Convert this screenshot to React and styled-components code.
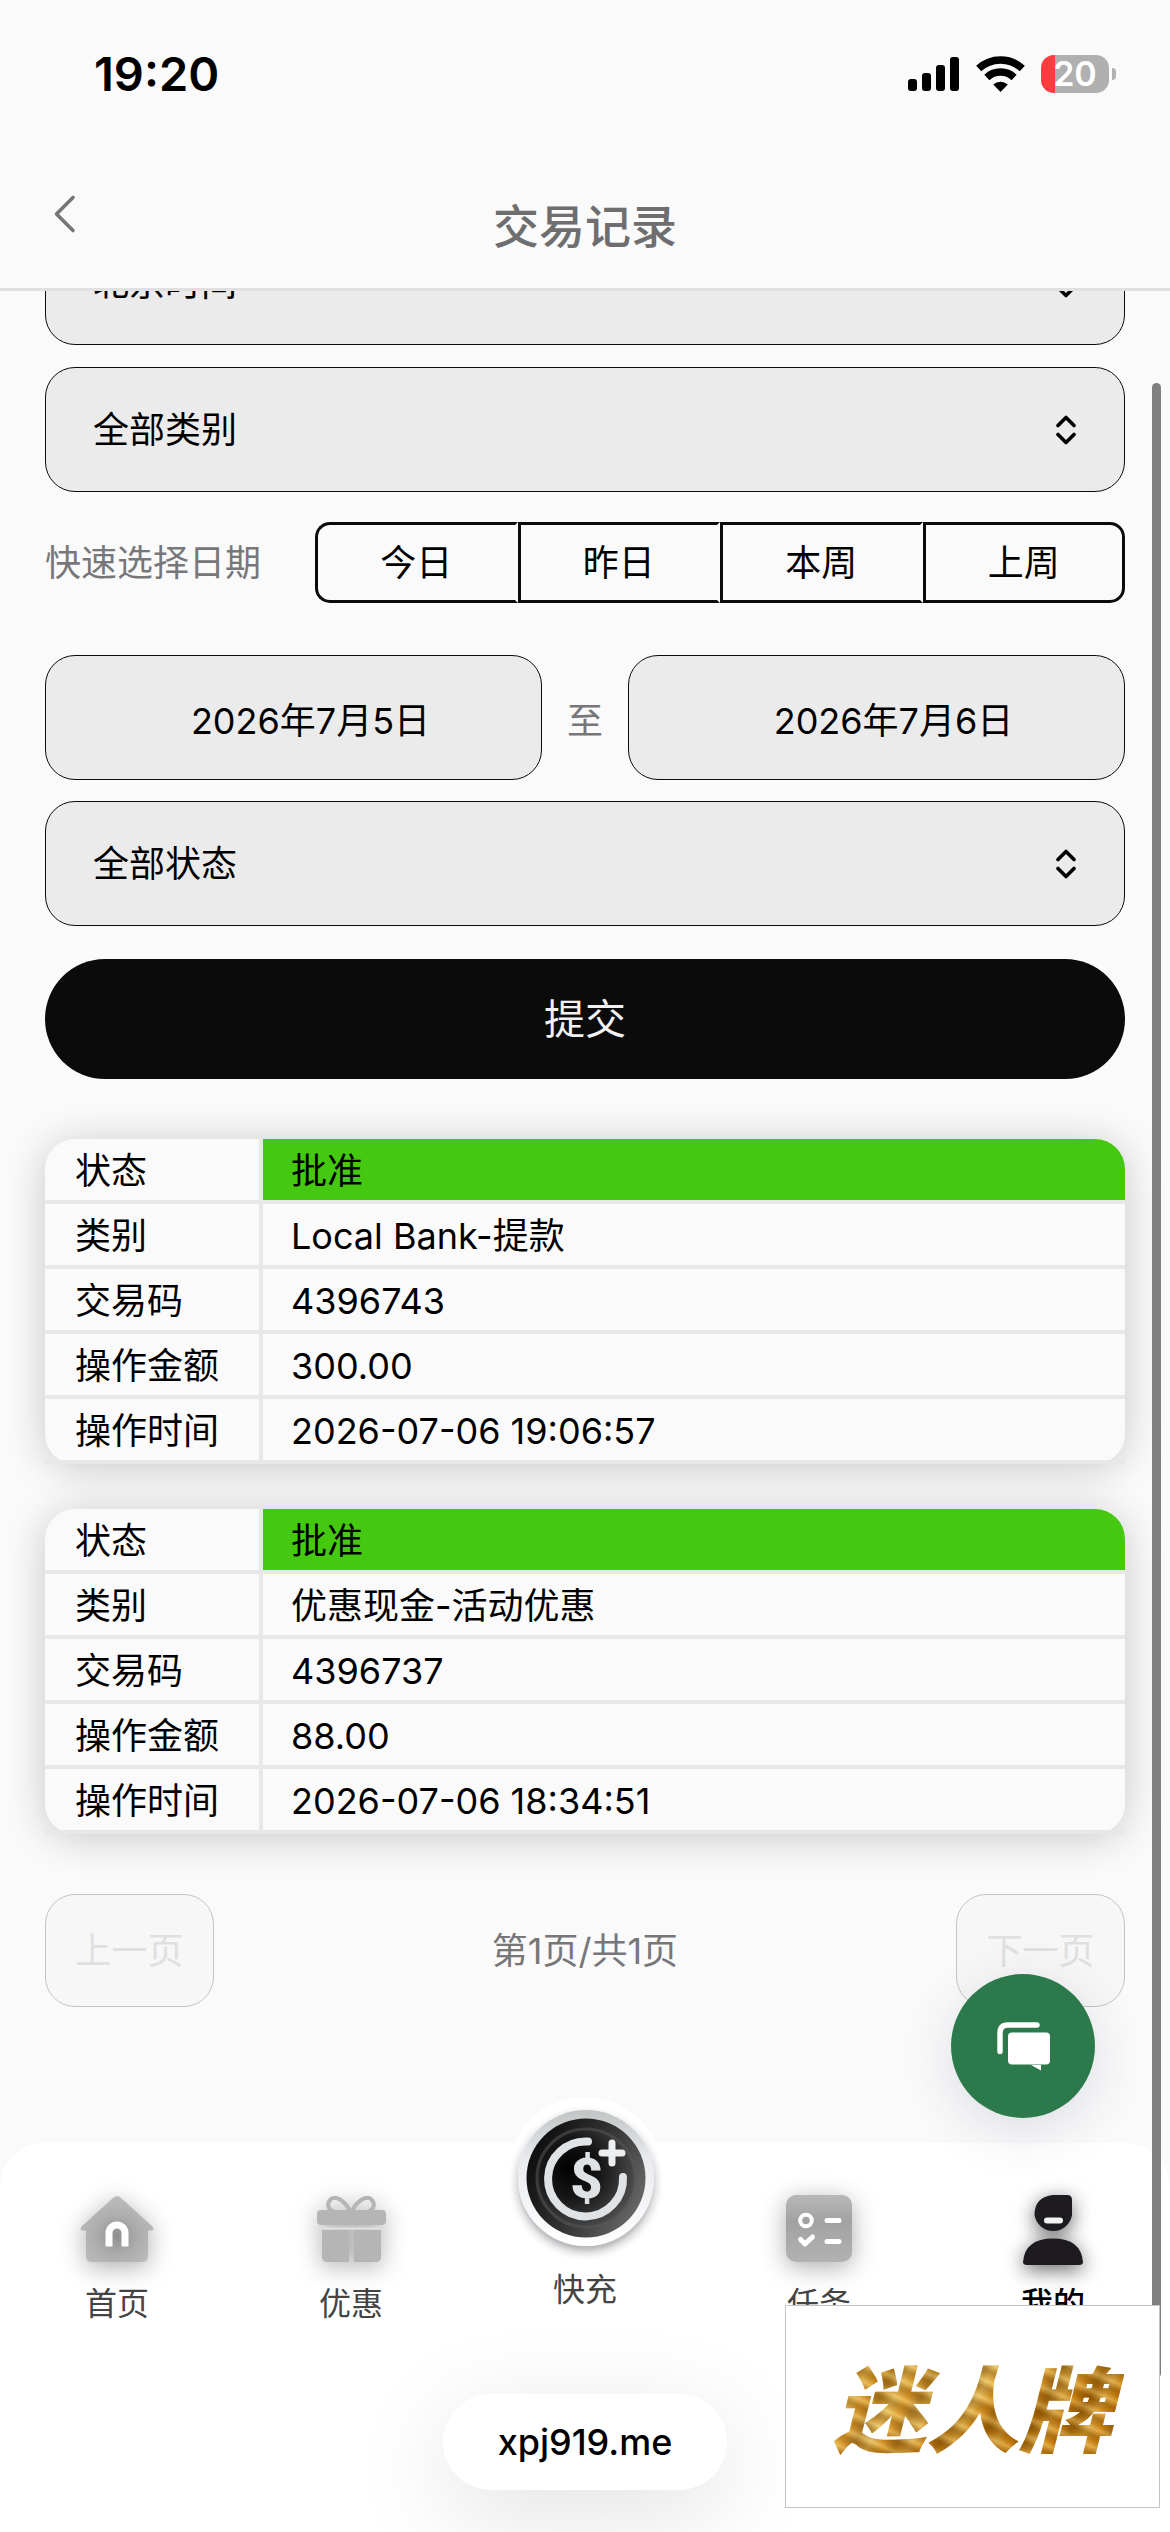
import React from "react";
import styled, { createGlobalStyle, css } from "styled-components";

const GlobalStyle = createGlobalStyle`
  *, *::before, *::after { box-sizing: border-box; }
  html { background: #fafafa; }
  body {
    margin: 0;
    background: #fafafa;
    color: #000;
    font-family: Inter, "Noto Sans CJK SC", sans-serif;
    font-size: 36px;
    line-height: 48px;
  }
  button, input, select { font: inherit; color: inherit; margin: 0; }
`;

const Page = styled.div`
  display: flex;
  flex-direction: column;
  min-height: 100vh;
  overflow: hidden;
`;

/* ---------- top ---------- */

const Top = styled.header`
  position: relative;
  z-index: 1;
  background: #fafafa;
  border-bottom: 3px solid #e0e0e0;
`;

const StatusBar = styled.div`
  display: flex;
  align-items: center;
  justify-content: space-between;
  height: 148px;
  padding: 0 54px 0 94px;
`;

const Clock = styled.time`
  font-size: 47px;
  line-height: 56px;
  font-weight: 600;
`;

const StatusIcons = styled.div`
  display: flex;
  align-items: center;
  gap: 16px;
`;

const Battery = styled.span`
  display: flex;
  align-items: center;
  gap: 3px;
`;

const BatteryBody = styled.span`
  display: flex;
  align-items: center;
  justify-content: center;
  width: 68px;
  height: 38px;
  border-radius: 13px;
  background: linear-gradient(90deg, #ff3b40 0 14px, #b0b0b0 14px);
  color: #fff;
  font-size: 34px;
  line-height: 38px;
  font-weight: 600;
`;

const BatteryTip = styled.span`
  width: 4px;
  height: 12px;
  border-radius: 0 6px 6px 0;
  background: #b0b0b0;
`;

const TitleBar = styled.div`
  display: grid;
  grid-template-columns: 120px 1fr 120px;
  align-items: center;
  height: 140px;
  padding-bottom: 4px;
`;

const BackButton = styled.button`
  display: flex;
  justify-content: center;
  padding: 0 0 4px 10px;
  border: 0;
  background: none;
  color: #757578;
`;

const Title = styled.h1`
  margin: 0;
  padding-top: 20px;
  text-align: center;
  font-size: 46px;
  line-height: 60px;
  font-weight: 500;
  color: #6e6e71;
`;

/* ---------- form ---------- */

const Main = styled.main`
  flex: 1;
  margin-top: -71px;
  padding: 0 45px 136px;
`;

const Form = styled.form`
  display: flex;
  flex-direction: column;
`;

const fieldBox = css`
  width: 100%;
  min-width: 0;
  height: 125px;
  border: 1px solid #0b0b0b;
  border-radius: 30px;
  background: #ebebeb;
`;

const SelectWrap = styled.div`
  display: grid;
  align-items: center;
  margin-bottom: ${(p) => p.$after}px;
  > * { grid-area: 1 / 1; }
  > svg { justify-self: end; margin-right: 48px; pointer-events: none; }
`;

const Select = styled.select`
  ${fieldBox}
  appearance: none;
  padding: 0 90px 0 47px;
`;

const QuickRow = styled.div`
  display: flex;
  align-items: center;
  margin-bottom: 52px;
`;

const QuickLabel = styled.span`
  flex: 1;
  color: #77777a;
`;

const Segments = styled.div`
  display: flex;
  width: 75%;
`;

const Segment = styled.button`
  flex: 1;
  height: 81px;
  padding: 0;
  background: none;
  border: 3px solid #0b0b0b;
  border-right-color: transparent;
  &:first-child { border-radius: 15px 0 0 15px; }
  &:last-child { border-right-color: #0b0b0b; border-radius: 0 15px 15px 0; }
`;

const DateRow = styled.div`
  display: flex;
  align-items: center;
  margin-bottom: 21px;
`;

const DateInput = styled.input`
  ${fieldBox}
  flex: 1;
  padding: 0 16px 0 50px;
  text-align: center;
`;

const To = styled.span`
  width: 86px;
  padding-top: 6px;
  text-align: center;
  color: #77777a;
`;

const Submit = styled.button`
  height: 120px;
  border: 0;
  border-radius: 60px;
  background: #0b0b0b;
  color: #f2f2f2;
  font-size: 41px;
`;

/* ---------- records ---------- */

const Records = styled.section`
  display: flex;
  flex-direction: column;
  gap: 45px;
  padding: 60px 0;
`;

const Card = styled.div`
  border-radius: 30px;
  background: #fafafa;
  box-shadow: 0 4px 42px rgba(0, 0, 0, 0.2);
`;

const Table = styled.table`
  width: 100%;
  table-layout: fixed;
  border-spacing: 0;
`;

const HeadCell = styled.th`
  width: 218px;
  height: 65px;
  padding: 2px 0 0 30px;
  border-right: 4px solid #e8e8e8;
  border-bottom: 4px solid #e8e8e8;
  text-align: left;
  font-weight: 400;
`;

const Cell = styled.td`
  height: 65px;
  padding: 2px 0 0 28px;
  border-bottom: 4px solid #e8e8e8;
  ${(p) =>
    p.$approved &&
    css`
      background: #45c910;
      background-clip: padding-box;
      border-top-right-radius: 30px;
    `}
`;

const Pager = styled.nav`
  display: flex;
  align-items: center;
  justify-content: space-between;
  color: #77777a;
`;

const PageButton = styled.button`
  width: 169px;
  height: 113px;
  padding: 0;
  border: 1px solid #c4c4c4;
  border-radius: 30px;
  background: #f7f7f7;
  color: #e0e0e0;
`;

/* ---------- bottom navigation ---------- */

const Bottom = styled.footer`
  display: flex;
  flex-direction: column;
  align-items: center;
  padding-bottom: 42px;
  background: #fff;
  border-radius: 45px 45px 0 0;
`;

const Tabs = styled.nav`
  display: flex;
  align-items: flex-start;
  width: 100%;
  height: 181px;
`;

const Tab = styled.a`
  flex: 1;
  display: flex;
  flex-direction: column;
  align-items: center;
  gap: ${(p) => (p.$raised ? 12 : 15)}px;
  margin-top: ${(p) => (p.$raised ? -45 : 46)}px;
  font-size: 32px;
  line-height: 40px;
  text-decoration: none;
  font-weight: ${(p) => (p.$active ? 500 : 400)};
  color: ${(p) => (p.$active ? "#000" : "#444")};
  > svg {
    filter: ${(p) =>
      p.$raised
        ? "none"
        : p.$active
        ? "drop-shadow(0 5px 10px rgba(0,0,0,.6))"
        : "drop-shadow(0 5px 12px rgba(0,0,0,.32))"};
  }
`;

const Address = styled.div`
  display: flex;
  align-items: center;
  height: 96px;
  margin-top: 70px;
  padding: 0 55px;
  border-radius: 48px;
  background: #fff;
  box-shadow: 0 24px 100px rgba(0, 0, 0, 0.12);
  font-weight: 500;
`;

/* ---------- floating layers ---------- */

const ChatButton = styled.button`
  position: fixed;
  right: 75px;
  bottom: 414px;
  z-index: 2;
  display: flex;
  align-items: center;
  justify-content: center;
  width: 144px;
  height: 144px;
  padding: 0;
  border: 0;
  border-radius: 50%;
  background: #2c7a4b;
  box-shadow: 0 12px 54px rgba(40, 50, 100, 0.14);
`;

const ScrollThumb = styled.div`
  position: fixed;
  top: 383px;
  right: 9px;
  bottom: 154px;
  z-index: 3;
  width: 9px;
  border-radius: 5px;
  background: #808080;
`;

const Stamp = styled.div`
  position: fixed;
  right: 10px;
  bottom: 24px;
  z-index: 4;
  display: flex;
  align-items: center;
  justify-content: center;
  width: 375px;
  height: 203px;
  padding-bottom: 4px;
  border: 1px solid #c4c4c4;
  background: #fff;
`;

const StampText = styled.span`
  padding: 0 12px;
  font-family: "Noto Sans CJK SC", sans-serif;
  font-size: 93px;
  line-height: 120px;
  font-weight: 900;
  font-style: italic;
  color: transparent;
  background:
    repeating-linear-gradient(24deg, rgba(110, 60, 0, 0.35) 0 2px, rgba(255, 232, 160, 0.3) 8px, rgba(150, 85, 0, 0.25) 13px, rgba(110, 60, 0, 0.35) 17px),
    repeating-linear-gradient(118deg, rgba(120, 66, 0, 0.35) 0 3px, rgba(255, 226, 140, 0.3) 15px, rgba(240, 140, 10, 0.35) 27px, rgba(120, 66, 0, 0.35) 37px),
    linear-gradient(160deg, #c48f1c, #e2b850 45%, #b87508 65%, #dca83c);
  background-clip: text;
  -webkit-background-clip: text;
`;

/* ---------- icons ---------- */

const UpDown = () => (
  <svg width="22" height="30" viewBox="0 0 22 30" fill="none" stroke="#000" strokeWidth="3.600" strokeLinecap="round" strokeLinejoin="round" aria-hidden="true">
    <path d="M3 10.500L11 2.500L19 10.500M3 19.500L11 27.500L19 19.500" />
  </svg>
);

const Signal = () => (
  <svg width="52" height="36" viewBox="0 0 52 36" aria-hidden="true">
    <rect x="0" y="23" width="9" height="12" rx="3" />
    <rect x="14" y="17" width="9" height="18" rx="3" />
    <rect x="28" y="9" width="9" height="26" rx="3" />
    <rect x="42" y="1" width="9" height="34" rx="3" />
  </svg>
);

const Wifi = () => (
  <svg width="49" height="38" viewBox="0 0 49 38" fill="none" stroke="#000" aria-hidden="true">
    <path d="M2.700 13.600A32 32 0 0 1 46.300 13.600" strokeWidth="7.500" />
    <path d="M10.900 22.400A20 20 0 0 1 38.100 22.400" strokeWidth="7.500" />
    <path d="M24.500 37L17.200 29.600A10.600 10.600 0 0 1 31.800 29.600Z" fill="#000" stroke="none" />
  </svg>
);

const Back = () => (
  <svg width="24" height="40" viewBox="0 0 24 40" fill="none" stroke="currentColor" strokeWidth="3.600" strokeLinecap="round" strokeLinejoin="round" aria-hidden="true">
    <path d="M20 3.500L3.500 20L20 36.500" />
  </svg>
);

const HomeIcon = () => (
  <svg width="80" height="80" viewBox="0 0 80 80" aria-hidden="true">
    <defs>
      <radialGradient id="home" cx=".5" cy=".6" r=".6">
        <stop offset="0" stopColor="#8f8f8f" />
        <stop offset=".5" stopColor="#adadad" />
        <stop offset="1" stopColor="#bdbdbd" />
      </radialGradient>
    </defs>
    <path d="M36.500 8.500Q40 5.500 43.500 8.500L75.500 37.500Q78 41.500 74 41.500H71V67Q71 73 65 73H15Q9 73 9 67V41.500H6Q2 41.500 4.500 37.500Z" fill="url(#home)" />
    <path d="M32 54V44A8 8 0 0 1 48 44V54" fill="none" stroke="#fff" strokeWidth="7" strokeLinecap="square" strokeLinejoin="round" />
  </svg>
);

const GiftIcon = () => (
  <svg width="80" height="80" viewBox="0 0 80 80" fill="#b5b5b5" aria-hidden="true">
    <path d="M39 22C34 12 25 6 20 10C15 15 17 21 24 23M41 22C46 12 55 6 60 10C65 15 63 21 56 23" fill="none" stroke="#b5b5b5" strokeWidth="4" />
    <rect x="6" y="21" width="69" height="15" rx="4" />
    <path d="M11 41H38V73H16Q11 73 11 68ZM43 41H70V68Q70 73 65 73H43Z" />
    <path d="M11 39.500H70" stroke="#e2e2e2" strokeWidth="2" />
  </svg>
);

const CoinIcon = () => (
  <svg width="160" height="160" viewBox="0 0 160 160" overflow="visible" aria-hidden="true">
    <defs>
      <linearGradient id="rim" x1="0" y1="0" x2="0" y2="1">
        <stop offset="0" stopColor="#c0c4c4" />
        <stop offset=".35" stopColor="#e8eaee" />
        <stop offset="1" stopColor="#fff" />
      </linearGradient>
      <linearGradient id="disc" x1="0" y1=".3" x2="1" y2=".8">
        <stop offset="0" stopColor="#0c0c0c" />
        <stop offset=".5" stopColor="#343434" />
        <stop offset="1" stopColor="#6e6e6e" />
      </linearGradient>
      <radialGradient id="core" cx=".35" cy=".4" r=".75">
        <stop offset="0" stopColor="#000" />
        <stop offset=".4" stopColor="#161616" />
        <stop offset="1" stopColor="#585858" />
      </radialGradient>
      <filter id="coinShadow" x="-30%" y="-30%" width="160%" height="160%">
        <feDropShadow dx="0" dy="5" stdDeviation="5" floodColor="#223" floodOpacity=".4" />
      </filter>
    </defs>
    <circle cx="80" cy="77" r="78" fill="#fff" />
    <circle cx="81" cy="80" r="68" fill="url(#rim)" filter="url(#coinShadow)" />
    <circle cx="81" cy="80" r="59.500" fill="url(#disc)" />
    <circle cx="81" cy="80" r="49" fill="url(#core)" stroke="#5a5a5a" strokeOpacity=".5" strokeWidth="3" />
    <path d="M83 43.500A37.500 37.500 0 1 0 118 79" fill="none" stroke="#e0e3e5" strokeWidth="8" strokeLinecap="round" />
    <path d="M107 45V65M97 55H117" fill="none" stroke="#eceeef" strokeWidth="7" strokeLinecap="round" />
    <text x="81.500" y="100" textAnchor="middle" fontFamily="Roboto, Inter, sans-serif" fontWeight="900" fontSize="56" fill="#dfe2e4">$</text>
  </svg>
);

const TaskIcon = () => (
  <svg width="80" height="80" viewBox="0 0 80 80" fill="none" aria-hidden="true">
    <defs>
      <linearGradient id="task" x1="0" y1="0" x2="0" y2="1">
        <stop offset="0" stopColor="#b8b8b8" />
        <stop offset=".4" stopColor="#a2a2a2" />
        <stop offset="1" stopColor="#b2b2b2" />
      </linearGradient>
    </defs>
    <rect x="7" y="6" width="66" height="67" rx="10" fill="url(#task)" />
    <g stroke="#fff" strokeWidth="5" strokeLinecap="round" strokeLinejoin="round">
      <circle cx="27" cy="31.500" r="5.800" strokeWidth="4" />
      <path d="M48 31.500H60M48 52.500H60M21.500 50.500L26 55L33.500 48" />
    </g>
  </svg>
);

const ProfileIcon = () => (
  <svg width="80" height="80" viewBox="0 0 80 80" fill="#1d1b1f" aria-hidden="true">
    <path d="M40 6H54Q59 6 59 11V26A19 19 0 0 1 21.500 26Q21.500 8 40 6Z" />
    <path d="M10 73Q12 49.500 40 49.500Q68 49.500 70 73Q70 76 66 76H14Q10 76 10 73Z" />
    <rect x="31" y="28.500" width="19" height="6" rx="3" fill="#f2f2f2" />
  </svg>
);

const ChatIcon = () => (
  <svg width="54" height="50" viewBox="0 0 54 50" fill="#fff" aria-hidden="true">
    <path d="M4 30.500V12Q4 4 12 4H41" fill="none" stroke="#fff" strokeWidth="5.400" strokeLinecap="round" />
    <rect x="12" y="11.500" width="42" height="32" rx="4" />
    <path d="M35 44H45V49.500Z" />
  </svg>
);

/* ---------- data ---------- */

const quickDates = ["今日", "昨日", "本周", "上周"];

const records = [
  { id: "4396743", type: "Local Bank-提款", amount: "300.00", time: "2026-07-06 19:06:57" },
  { id: "4396737", type: "优惠现金-活动优惠", amount: "88.00", time: "2026-07-06 18:34:51" },
];

const tabs = [
  { label: "首页", Icon: HomeIcon },
  { label: "优惠", Icon: GiftIcon },
  { label: "快充", Icon: CoinIcon, raised: true },
  { label: "任务", Icon: TaskIcon },
  { label: "我的", Icon: ProfileIcon, active: true },
];

function Picker({ label, value, after }) {
  return (
    <SelectWrap $after={after}>
      <Select aria-label={label} defaultValue={value}>
        <option>{value}</option>
      </Select>
      <UpDown />
    </SelectWrap>
  );
}

function Record({ record }) {
  return (
    <Card>
      <Table>
        <tbody>
          <tr>
            <HeadCell scope="row">状态</HeadCell>
            <Cell $approved>批准</Cell>
          </tr>
          <tr>
            <HeadCell scope="row">类别</HeadCell>
            <Cell>{record.type}</Cell>
          </tr>
          <tr>
            <HeadCell scope="row">交易码</HeadCell>
            <Cell>{record.id}</Cell>
          </tr>
          <tr>
            <HeadCell scope="row">操作金额</HeadCell>
            <Cell>{record.amount}</Cell>
          </tr>
          <tr>
            <HeadCell scope="row">操作时间</HeadCell>
            <Cell>{record.time}</Cell>
          </tr>
        </tbody>
      </Table>
    </Card>
  );
}

export default function App() {
  return (
    <Page lang="zh-CN">
      <GlobalStyle />
      <Top>
        <StatusBar>
          <Clock>19:20</Clock>
          <StatusIcons>
            <Signal />
            <Wifi />
            <Battery>
              <BatteryBody>20</BatteryBody>
              <BatteryTip />
            </Battery>
          </StatusIcons>
        </StatusBar>
        <TitleBar>
          <BackButton type="button" aria-label="返回">
            <Back />
          </BackButton>
          <Title>交易记录</Title>
        </TitleBar>
      </Top>

      <Main>
        <Form onSubmit={(e) => e.preventDefault()}>
          <Picker label="时区" value="北京时间" after={22} />
          <Picker label="类别" value="全部类别" after={30} />
          <QuickRow>
            <QuickLabel>快速选择日期</QuickLabel>
            <Segments>
              {quickDates.map((d) => (
                <Segment key={d} type="button">{d}</Segment>
              ))}
            </Segments>
          </QuickRow>
          <DateRow>
            <DateInput type="text" aria-label="开始日期" defaultValue="2026年7月5日" />
            <To>至</To>
            <DateInput type="text" aria-label="结束日期" defaultValue="2026年7月6日" />
          </DateRow>
          <Picker label="状态" value="全部状态" after={33} />
          <Submit type="submit">提交</Submit>
        </Form>

        <Records>
          {records.map((r) => (
            <Record key={r.id} record={r} />
          ))}
        </Records>

        <Pager aria-label="分页">
          <PageButton type="button" disabled>上一页</PageButton>
          <span>第1页/共1页</span>
          <PageButton type="button" disabled>下一页</PageButton>
        </Pager>
      </Main>

      <Bottom>
        <Tabs>
          {tabs.map(({ label, Icon, raised, active }) => (
            <Tab key={label} href="#" $raised={raised} $active={active}>
              <Icon />
              {label}
            </Tab>
          ))}
        </Tabs>
        <Address>xpj919.me</Address>
      </Bottom>

      <ChatButton type="button" aria-label="在线客服">
        <ChatIcon />
      </ChatButton>
      <ScrollThumb />
      <Stamp>
        <StampText>迷人牌</StampText>
      </Stamp>
    </Page>
  );
}
